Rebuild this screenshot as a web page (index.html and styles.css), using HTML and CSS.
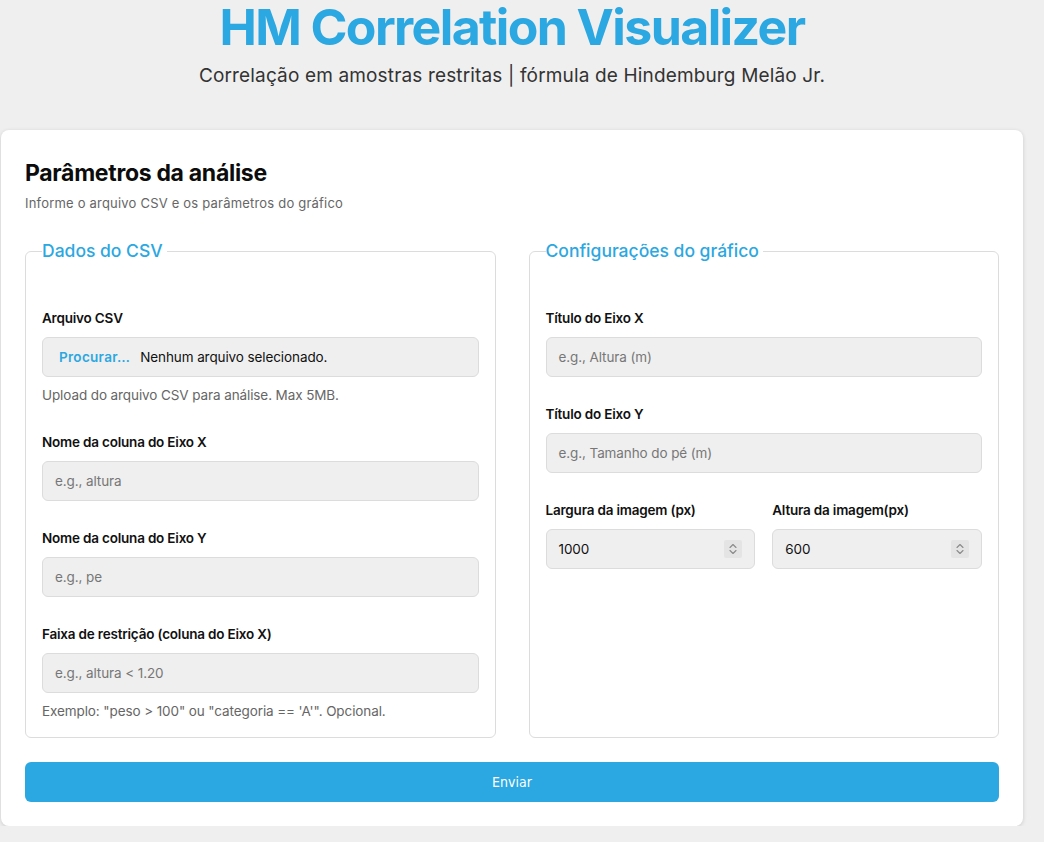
FILE: index.html
```html
<!DOCTYPE html>
<html lang="pt-BR">
<head>
<meta charset="utf-8">
<title>HM Correlation Visualizer</title>
<link rel="stylesheet" href="styles.css">
</head>
<body>
<div class="page">
  <header class="hero">
    <h1 class="hero-title">HM Correlation Visualizer</h1>
    <p class="hero-sub">Correlação em amostras restritas | fórmula de Hindemburg Melão Jr.</p>
  </header>

  <main class="card">
    <h2 class="card-title">Parâmetros da análise</h2>
    <p class="card-desc">Informe o arquivo CSV e os parâmetros do gráfico</p>

    <div class="columns">
      <fieldset class="group">
        <legend class="group-legend">Dados do CSV</legend>

        <div class="field">
          <label class="field-label">Arquivo CSV</label>
          <div class="input file-input"><span class="file-btn">Procurar…</span><span class="file-name">Nenhum arquivo selecionado.</span></div>
          <p class="field-help">Upload do arquivo CSV para análise. Max 5MB.</p>
        </div>

        <div class="field">
          <label class="field-label">Nome da coluna do Eixo X</label>
          <div class="input placeholder">e.g., altura</div>
        </div>

        <div class="field">
          <label class="field-label">Nome da coluna do Eixo Y</label>
          <div class="input placeholder">e.g., pe</div>
        </div>

        <div class="field">
          <label class="field-label">Faixa de restrição (coluna do Eixo X)</label>
          <div class="input placeholder">e.g., altura &lt; 1.20</div>
          <p class="field-help">Exemplo: "peso &gt; 100" ou "categoria == 'A'". Opcional.</p>
        </div>
      </fieldset>

      <fieldset class="group">
        <legend class="group-legend">Configurações do gráfico</legend>

        <div class="field">
          <label class="field-label">Título do Eixo X</label>
          <div class="input placeholder">e.g., Altura (m)</div>
        </div>

        <div class="field">
          <label class="field-label">Título do Eixo Y</label>
          <div class="input placeholder">e.g., Tamanho do pé (m)</div>
        </div>

        <div class="field-row">
          <div class="field">
            <label class="field-label">Largura da imagem (px)</label>
            <div class="input number-input"><span>1000</span><span class="spin"><svg width="10" height="14" viewBox="0 0 10 14"><path d="M2 5.5 L5 2.5 L8 5.5 M2 8.5 L5 11.5 L8 8.5" fill="none" stroke="#8a8a8a" stroke-width="1.1" stroke-linecap="round" stroke-linejoin="round"/></svg></span></div>
          </div>
          <div class="field">
            <label class="field-label">Altura da imagem(px)</label>
            <div class="input number-input"><span>600</span><span class="spin"><svg width="10" height="14" viewBox="0 0 10 14"><path d="M2 5.5 L5 2.5 L8 5.5 M2 8.5 L5 11.5 L8 8.5" fill="none" stroke="#8a8a8a" stroke-width="1.1" stroke-linecap="round" stroke-linejoin="round"/></svg></span></div>
          </div>
        </div>
      </fieldset>
    </div>

    <button class="submit" type="button">Enviar</button>
  </main>
</div>
</body>
</html>
```

FILE: styles.css
```css
* { box-sizing: border-box; }

html, body {
  margin: 0;
  padding: 0;
  background: #efefef;
}

body {
  font-family: Inter, "Noto Sans", sans-serif;
  color: #111;
}

.page {
  width: 1024px;
  padding: 0 1px;
}

.hero {
  text-align: center;
  height: 130px;
}

.hero-title {
  margin: 0;
  font-size: 50px;
  line-height: 54px;
  font-weight: 700;
  color: #2ba7e2;
  letter-spacing: -1.6px;
}

.hero-sub {
  margin: 10px 0 0;
  font-size: 19px;
  line-height: 24px;
  color: #333;
  letter-spacing: 0.15px;
}

.card {
  background: #fff;
  border-radius: 8px;
  box-shadow: 0 1px 4px rgba(0, 0, 0, 0.15);
  padding: 24px;
}

.card-title {
  margin: 5px 0 0;
  font-size: 23px;
  line-height: 28px;
  font-weight: 700;
  color: #0c0c0c;
  letter-spacing: -0.3px;
}

.card-desc {
  margin: 7px 0 0;
  font-size: 13px;
  line-height: 18px;
  color: #666;
  letter-spacing: 0.2px;
}

.columns {
  display: grid;
  grid-template-columns: 1fr 1fr;
  column-gap: 33px;
  margin-top: 27px;
}

.group {
  margin: 0;
  border: 1px solid #dcdcdc;
  border-radius: 6px;
  padding: 0 16px 16px;
  min-width: 0;
}

.group-legend {
  font-size: 17.5px;
  line-height: 24px;
  color: #2ba7e2;
  padding: 0 4px 0 0;
  margin-left: 0;
  font-weight: 500;
  margin-bottom: 45px;
}

.field + .field,
.field-row + .field,
.field + .field-row {
  margin-top: 27px;
}

.field-row {
  display: grid;
  grid-template-columns: 1fr 1fr;
  column-gap: 17px;
}

.field-row .field + .field { margin-top: 0; }

.field-label {
  display: block;
  font-size: 13.5px;
  line-height: 20px;
  font-weight: 600;
  color: #111;
  margin-bottom: 9px;
  letter-spacing: -0.2px;
}

.input {
  height: 40px;
  background: #efefef;
  border: 1px solid #dcdcdc;
  border-radius: 6px;
  padding: 0 12px;
  display: flex;
  align-items: center;
  font-size: 13.5px;
  letter-spacing: -0.1px;
  color: #111;
}

.placeholder { color: #777; }

.file-input { padding-left: 16px; }

.file-btn {
  color: #2ba7e2;
  font-weight: 600;
  margin-right: 10px;
  letter-spacing: 0.3px;
}

.number-input { justify-content: space-between; }

.spin {
  width: 18px;
  height: 18px;
  background: #e4e4e4;
  display: flex;
  align-items: center;
  justify-content: center;
  border-radius: 2px;
}

.field-help {
  margin: 8px 0 0;
  font-size: 13.5px;
  line-height: 20px;
  color: #666;
  letter-spacing: -0.1px;
}

.submit {
  display: block;
  width: 100%;
  height: 40px;
  margin-top: 24px;
  border: 0;
  border-radius: 6px;
  background: #2ba7e2;
  color: #fff;
  font-family: "DejaVu Sans Condensed", "DejaVu Sans", sans-serif;
  font-size: 14px;
}
```
